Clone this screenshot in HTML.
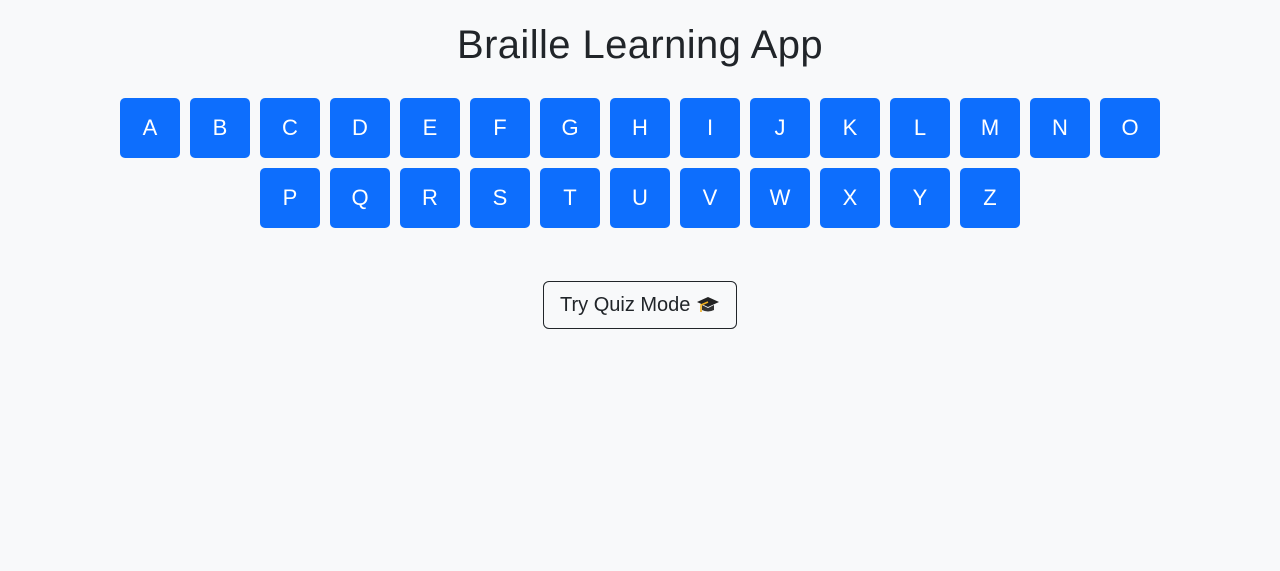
<!DOCTYPE html>
<html><head><meta charset="utf-8"><style>
html,body{margin:0;background:#f8f9fa;width:1280px;height:571px;overflow:hidden;font-family:"Liberation Sans",sans-serif;color:#212529}
h1{position:absolute;top:22px;left:0;width:1280px;text-align:center;margin:0;font-weight:400;font-size:40px;line-height:46px;letter-spacing:0.4px}
.row{position:absolute;left:0;width:1280px;display:flex;justify-content:center;gap:10px}
.k{width:60px;height:60px;background:#0d6efd;color:#fff;border-radius:5px;display:flex;align-items:center;justify-content:center;font-size:22px}
.q{position:absolute;left:543px;top:281px;width:192px;height:46px;border:1px solid #212529;border-radius:6px;display:flex;align-items:center;justify-content:center;font-size:20px;box-sizing:content-box}
</style></head><body>
<h1>Braille Learning App</h1>
<div class="row" style="top:98px"><div class="k">A</div><div class="k">B</div><div class="k">C</div><div class="k">D</div><div class="k">E</div><div class="k">F</div><div class="k">G</div><div class="k">H</div><div class="k">I</div><div class="k">J</div><div class="k">K</div><div class="k">L</div><div class="k">M</div><div class="k">N</div><div class="k">O</div></div>
<div class="row" style="top:168px"><div class="k">P</div><div class="k">Q</div><div class="k">R</div><div class="k">S</div><div class="k">T</div><div class="k">U</div><div class="k">V</div><div class="k">W</div><div class="k">X</div><div class="k">Y</div><div class="k">Z</div></div>
<div class="q">Try Quiz Mode&nbsp;<svg width="24" height="20" viewBox="0 0 24 20"><path d="M1 7 L12 2 L23 7 L12 12 Z" fill="#222"/><path d="M6 10 L6 15 Q12 18 18 15 L18 10 L12 13 Z" fill="#333"/><path d="M12 7 L5 10 L5 17" stroke="#f0b020" stroke-width="1.6" fill="none"/></svg></div>
</body></html>
